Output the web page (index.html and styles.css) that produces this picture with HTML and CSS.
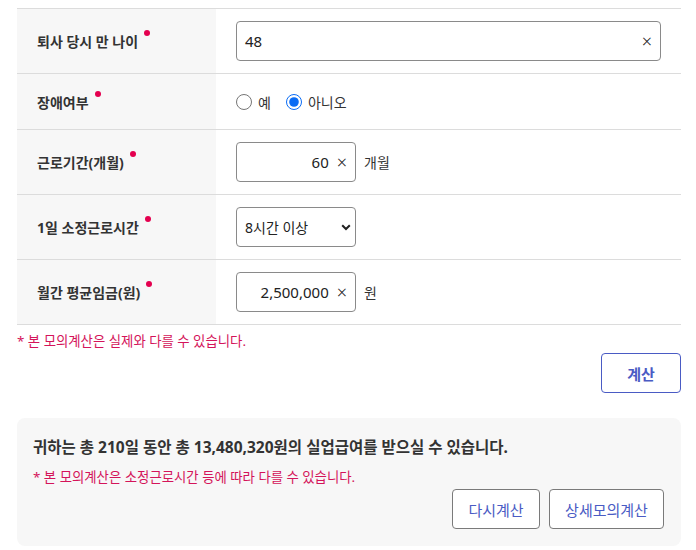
FILE: index.html
```html
<!DOCTYPE html>
<html lang="ko">
<head>
<meta charset="utf-8">
<link rel="stylesheet" href="styles.css">
</head>
<body>
<div class="page">
  <div class="form">
    <div class="row">
      <div class="label">퇴사 당시 만 나이<span class="req"></span></div>
      <div class="field">
        <div class="input wide"><span class="val">48</span><span class="clear">×</span></div>
      </div>
    </div>
    <div class="row short">
      <div class="label">장애여부<span class="req"></span></div>
      <div class="field">
        <label class="radio"><input type="radio" name="d"> 예</label>
        <label class="radio"><input type="radio" name="d" checked> 아니오</label>
      </div>
    </div>
    <div class="row">
      <div class="label">근로기간(개월)<span class="req"></span></div>
      <div class="field">
        <div class="input small"><span class="val right">60</span><span class="clear">×</span></div>
        <span class="unit">개월</span>
      </div>
    </div>
    <div class="row">
      <div class="label">1일 소정근로시간<span class="req"></span></div>
      <div class="field">
        <div class="select"><span>8시간 이상</span>
          <svg width="10" height="7" viewBox="0 0 10 7"><path d="M1.2 1.2 L5 5 L8.8 1.2" fill="none" stroke="#222" stroke-width="2"/></svg>
        </div>
      </div>
    </div>
    <div class="row">
      <div class="label">월간 평균임금(원)<span class="req"></span></div>
      <div class="field">
        <div class="input small"><span class="val right">2,500,000</span><span class="clear">×</span></div>
        <span class="unit">원</span>
      </div>
    </div>
  </div>
  <p class="note">* 본 모의계산은 실제와 다를 수 있습니다.</p>
  <div class="actions"><button class="btn primary">계산</button></div>
  <div class="result">
    <p class="result-title">귀하는 총 210일 동안 총 13,480,320원의 실업급여를 받으실 수 있습니다.</p>
    <p class="note inbox">* 본 모의계산은 소정근로시간 등에 따라 다를 수 있습니다.</p>
    <div class="result-actions">
      <button class="btn outline w1">다시계산</button>
      <button class="btn outline w2">상세모의계산</button>
    </div>
  </div>
</div>
</body>
</html>
```
FILE: styles.css
```css
* { box-sizing: border-box; }
body {
  margin: 0;
  font-family: "Noto Sans", "Noto Sans CJK KR", sans-serif;
  color: #222;
  background: #fff;
}
.page { padding: 8px 15px 0 17px; }
.form { border-top: 1px solid #dcdcdc; }
.row {
  display: grid;
  grid-template-columns: 199px 1fr;
  border-bottom: 1px solid #dcdcdc;
  height: 65px;
}
.row.short { height: 56px; }
.label {
  background: #f7f7f7;
  display: flex;
  align-items: center;
  padding-left: 20px;
  font-size: 14px;
  font-weight: 700;
  color: #333;
}
.req {
  display: inline-block;
  width: 6px; height: 6px;
  border-radius: 50%;
  background: #e4004f;
  margin-left: 6px;
  position: relative;
  top: -8px;
}
.field {
  display: flex;
  align-items: center;
  padding-left: 20px;
}
.input {
  height: 40px;
  border: 1px solid #8a8a8a;
  border-radius: 4px;
  display: flex;
  align-items: center;
  padding: 0 8px 0 8px;
  font-size: 15px;
  color: #222;
}
.input.wide { width: 425px; }
.input.small { width: 120px; }
.val { flex: 1; }
.val.right { text-align: right; padding-right: 8px; }
.clear { font-size: 18px; font-weight: 300; color: #222; line-height: 1; }
.unit { margin-left: 8px; font-size: 14px; color: #333; }
.radio {
  display: inline-flex;
  align-items: center;
  font-size: 14px;
  color: #333;
  margin-right: 15px;
}
.radio input {
  width: 16px; height: 16px;
  margin: 0 6px 0 0;
  accent-color: #0a6cf5;
}
.select {
  width: 120px;
  height: 40px;
  border: 1px solid #8a8a8a;
  border-radius: 4px;
  display: flex;
  align-items: center;
  justify-content: space-between;
  padding: 0 4px 0 8px;
  font-size: 14px;
  color: #222;
}
.note {
  margin: 0;
  font-size: 13.4px;
  color: #d4145a;
  line-height: 18px;
  padding-top: 7px;
}
.actions {
  display: flex;
  justify-content: flex-end;
  margin-top: 3px;
}
.btn {
  font-family: inherit;
  height: 40px;
  border-radius: 4px;
  background: #fff;
  font-size: 15px;
  cursor: pointer;
}
.btn.primary {
  width: 80px;
  border: 1px solid #4a5bc4;
  color: #4a5bc4;
  font-weight: 700;
}
.result {
  margin-top: 25px;
  background: #f7f7f7;
  border-radius: 8px;
  padding: 16px 17px 17px 16px;
}
.result-title {
  margin: 0;
  font-size: 15.5px;
  font-weight: 700;
  color: #333;
  line-height: 26px;
}
.note.inbox { padding-top: 8px; }
.result-actions {
  display: flex;
  justify-content: flex-end;
  gap: 9px;
  margin-top: 3px;
}
.btn.outline {
  border: 1px solid #7a7a7a;
  color: #4a5bc4;
}
.btn.w1 { width: 88px; }
.btn.w2 { width: 115px; }
```
